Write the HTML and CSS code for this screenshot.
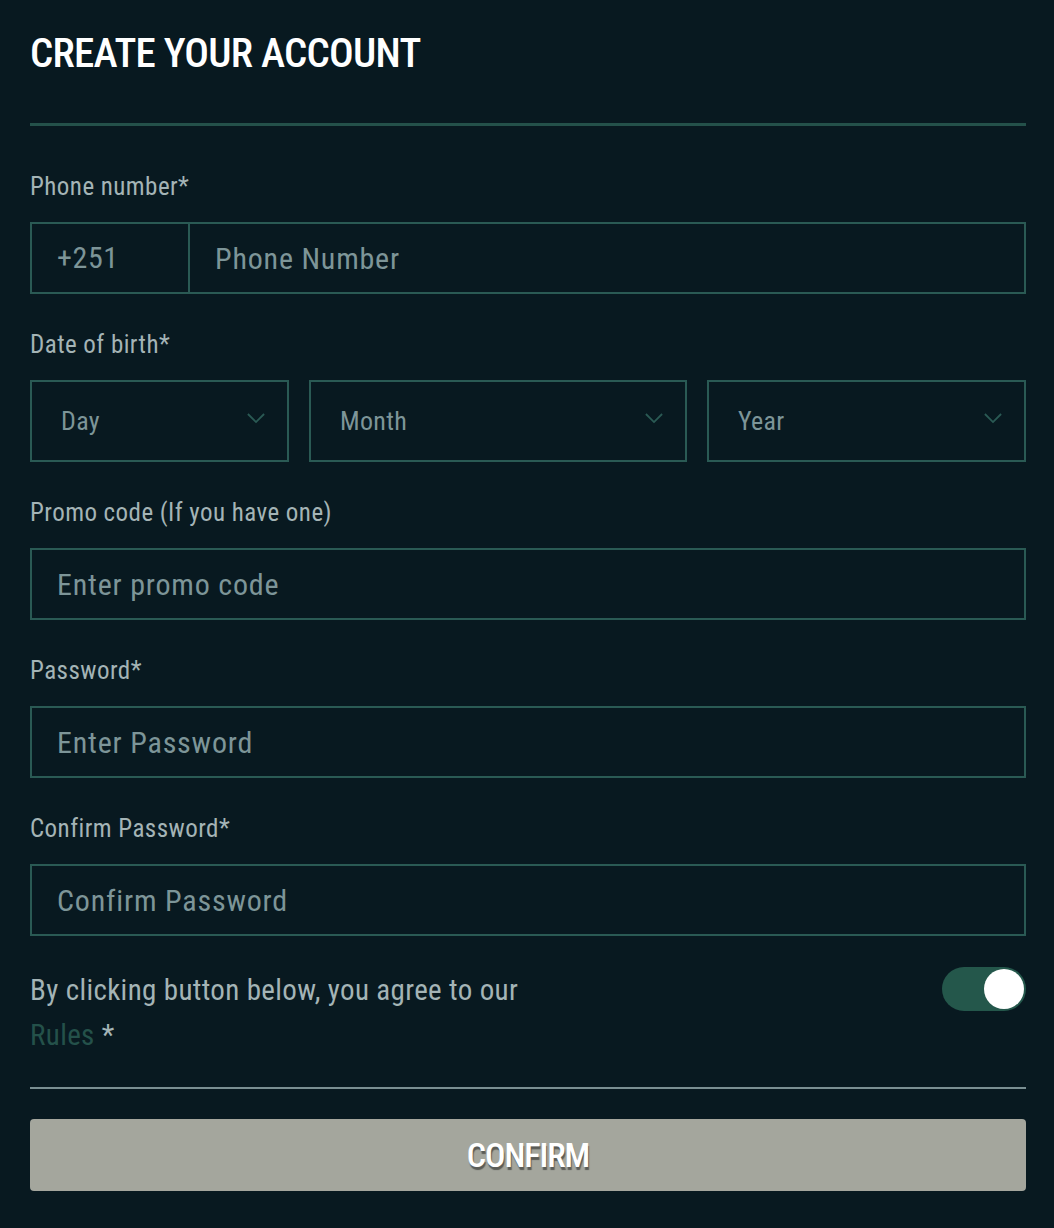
FILE: index.html
```html
<!DOCTYPE html>
<html lang="en">
<head>
    <meta charset="UTF-8">
    <title>Create your account</title>
    <link rel="stylesheet" href="styles.css">
</head>
<body>
  <div class="signup">
    <h1 class="signup-title">CREATE YOUR ACCOUNT</h1>

    <form class="signup-form">
      <div class="field">
        <label class="field-label">Phone number*</label>
        <div class="phone-box">
          <span class="phone-code">+251</span>
          <input class="phone-input" placeholder="Phone Number">
        </div>
      </div>

      <div class="field">
        <label class="field-label">Date of birth*</label>
        <div class="dob-row">
          <div class="select-box">
            <span>Day</span>
            <svg class="chevron" viewBox="0 0 20 12"><path d="M1 1l9 9 9-9" /></svg>
          </div>
          <div class="select-box">
            <span>Month</span>
            <svg class="chevron" viewBox="0 0 20 12"><path d="M1 1l9 9 9-9" /></svg>
          </div>
          <div class="select-box">
            <span>Year</span>
            <svg class="chevron" viewBox="0 0 20 12"><path d="M1 1l9 9 9-9" /></svg>
          </div>
        </div>
      </div>

      <div class="field">
        <label class="field-label">Promo code (If you have one)</label>
        <input class="text-input" placeholder="Enter promo code">
      </div>

      <div class="field">
        <label class="field-label">Password*</label>
        <input class="text-input" type="password" placeholder="Enter Password">
      </div>

      <div class="field">
        <label class="field-label">Confirm Password*</label>
        <input class="text-input" type="password" placeholder="Confirm Password">
      </div>

      <div class="agree-row">
        <p class="agree-text">By clicking button below, you agree to our<br><a href="#" class="rules-link">Rules</a> *</p>
        <span class="toggle"><span class="toggle-knob"></span></span>
      </div>

      <button type="button" class="confirm-btn">CONFIRM</button>
    </form>
  </div>
</body>
</html>
```

FILE: styles.css
```css
* { box-sizing: border-box; }
body { margin: 0; background: #081920; font-family: Roboto, "Liberation Sans", sans-serif; font-stretch: 80%; color: #a4b4b6; }
.signup { padding: 30px 28px 36px 30px; }
.signup-title { margin: 0; font-size: 41px; font-weight: 500; letter-spacing: -0.75px; color: #ffffff; line-height: 44px; padding-top: 1px; }
.signup-form { margin-top: 48px; border-top: 3px solid #24514a; padding-top: 46px; }

.field { margin-bottom: 36px; }
.field-label { display: block; font-size: 25px; line-height: 30px; letter-spacing: 0.45px; color: #a4b4b6; margin-bottom: 20px; }

.phone-box { display: flex; height: 72px; border: 2px solid #2a5a54; }
.phone-code { width: 158px; border-right: 2px solid #2a5a54; padding-left: 25px; font-size: 30px; line-height: 68px; letter-spacing: 0.6px; color: #7d9598; }
.phone-input, .text-input { flex: 1; border: none; background: transparent; font-family: inherit; font-stretch: inherit; font-size: 30px; letter-spacing: 0.8px; color: #c8d4d5; padding: 0 25px; outline: none; }
.phone-input::placeholder, .text-input::placeholder { color: #7d9598; }
.text-input { display: block; width: 100%; height: 72px; border: 2px solid #2a5a54; }

.dob-row { display: grid; grid-template-columns: 259fr 378fr 319fr; gap: 20px; }
.select-box { height: 82px; border: 2px solid #2a5a54; display: flex; align-items: center; justify-content: space-between; padding: 0 22px 0 29px; font-size: 26px; letter-spacing: 0.3px; color: #7d9598; }
.chevron { width: 18px; height: 11px; fill: none; stroke: #2a5a54; stroke-width: 2; margin-top: -6px; }

.agree-row { display: flex; justify-content: space-between; align-items: flex-start; margin-top: -4px; padding-bottom: 29px; border-bottom: 2px solid #7a8f92; }
.agree-text { margin: 0; font-size: 29px; line-height: 45px; letter-spacing: 0.36px; color: #a4b4b6; }
.rules-link { color: #24514a; text-decoration: none; }
.toggle { position: relative; width: 84px; height: 44px; border-radius: 22px; background: #24574b; margin-top: -1px; }
.toggle-knob { position: absolute; right: 2px; top: 2px; width: 40px; height: 40px; border-radius: 50%; background: #ffffff; }

.confirm-btn { display: block; width: 100%; height: 72px; margin-top: 30px; border: none; border-radius: 4px; background: #a4a69d; color: #ffffff; font-family: inherit; font-stretch: inherit; font-size: 34px; font-weight: 500; letter-spacing: -1.1px; text-shadow: 1px 3px 1px rgba(0, 0, 0, 0.45); }
```
